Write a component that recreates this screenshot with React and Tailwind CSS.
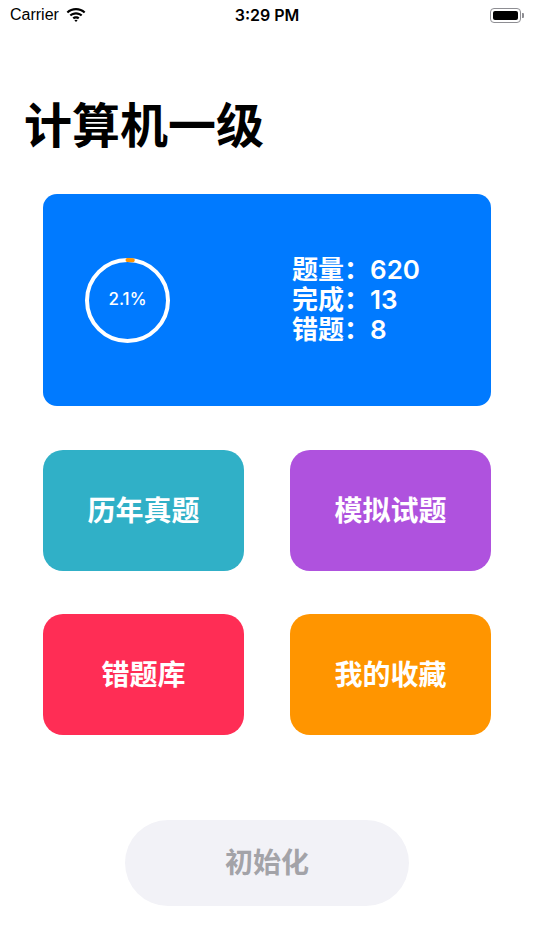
import React from "react";

function Wifi() {
  return (
    <svg width="20" height="14" viewBox="0 0 20 14">
      <path d="M10 2.2c3 0 5.8 1.1 7.9 3.1l1.5-1.6C16.9 1.3 13.6 0 10 0S3.1 1.3.6 3.7l1.5 1.6C4.2 3.3 7 2.2 10 2.2z" fill="#000" />
      <path d="M10 6.4c1.9 0 3.6.7 4.9 1.9l1.5-1.6C14.7 5.1 12.4 4.2 10 4.2S5.3 5.1 3.6 6.7l1.5 1.6C6.4 7.1 8.1 6.4 10 6.4z" fill="#000" />
      <path d="M10 10.4c.8 0 1.5.3 2 .8l1.5-1.6C12.6 8.8 11.4 8.3 10 8.3s-2.6.5-3.5 1.3L8 11.2c.5-.5 1.2-.8 2-.8z" fill="#000" />
      <path d="M10 14l1.6-1.7c-.4-.4-1-.6-1.6-.6s-1.2.2-1.6.6z" fill="#000" />
    </svg>
  );
}

function Ring() {
  const r = 40.5;
  const c = 2 * Math.PI * r;
  const len = c * 0.021;
  return (
    <div className="relative w-[85px] h-[85px] shrink-0">
      <svg width="85" height="85" viewBox="0 0 85 85" className="absolute inset-0">
        <circle cx="42.5" cy="42.5" r={r} fill="none" stroke="#ffffff" strokeWidth="4" />
        <circle
          cx="42.5"
          cy="42.5"
          r={r}
          fill="none"
          stroke="#ff9500"
          strokeWidth="4"
          strokeLinecap="round"
          strokeDasharray={`${len} ${c}`}
          transform="rotate(-90 42.5 42.5)"
        />
      </svg>
      <div className="absolute inset-0 flex items-center justify-center text-white text-[17px] font-medium font-['Inter','Noto_Sans_CJK_SC',sans-serif]">
        2.1%
      </div>
    </div>
  );
}

function Tile({ label, bg }) {
  return (
    <div className={`h-[121px] rounded-[20px] flex items-center justify-center ${bg}`}>
      <span className="text-white text-[28px] font-semibold leading-none">{label}</span>
    </div>
  );
}

export default function App() {
  return (
    <div className="w-[534px] h-[950px] bg-white font-['Inter','Noto_Sans_CJK_SC',sans-serif] text-black overflow-hidden">
      {/* status bar */}
      <div className="h-[30px] flex items-center justify-between px-[10px] relative">
        <div className="flex items-center gap-[7px]">
          <span className="text-[16px] font-['Liberation_Sans',sans-serif] leading-none">Carrier</span>
          <Wifi />
        </div>
        <span className="absolute left-1/2 -translate-x-1/2 text-[16px] font-semibold leading-none">3:29 PM</span>
        <div className="flex items-center">
          <div className="w-[31px] h-[15px] rounded-[4px] border border-[#8e8e93] p-[2px]">
            <div className="w-full h-full rounded-[2px] bg-black" />
          </div>
          <div className="w-[2px] h-[5px] rounded-r-[1px] bg-[#8e8e93] ml-[1px]" />
        </div>
      </div>

      {/* title */}
      <div className="pl-[24px] pt-[66px]">
        <h1 className="text-[48px] font-bold leading-[60px]">计算机一级</h1>
      </div>

      <div className="px-[43px] pt-[38px]">
        {/* summary card */}
        <div className="h-[212px] rounded-[14px] bg-[#007aff] flex items-center pl-[42px]">
          <Ring />
          <div className="ml-[122px] text-white text-[26px] font-semibold leading-[30px]">
            <div>题量：620</div>
            <div>完成：13</div>
            <div>错题：8</div>
          </div>
        </div>

        {/* tiles */}
        <div className="grid grid-cols-2 gap-x-[46px] gap-y-[43px] mt-[44px]">
          <Tile label="历年真题" bg="bg-[#30b0c7]" />
          <Tile label="模拟试题" bg="bg-[#af52de]" />
          <Tile label="错题库" bg="bg-[#ff2d55]" />
          <Tile label="我的收藏" bg="bg-[#ff9500]" />
        </div>
      </div>

      {/* reset button */}
      <div className="flex justify-center mt-[85px]">
        <div className="w-[284px] h-[86px] rounded-full bg-[#f2f2f7] flex items-center justify-center">
          <span className="text-[28px] font-semibold text-[#a3a3a8] leading-none">初始化</span>
        </div>
      </div>
    </div>
  );
}
